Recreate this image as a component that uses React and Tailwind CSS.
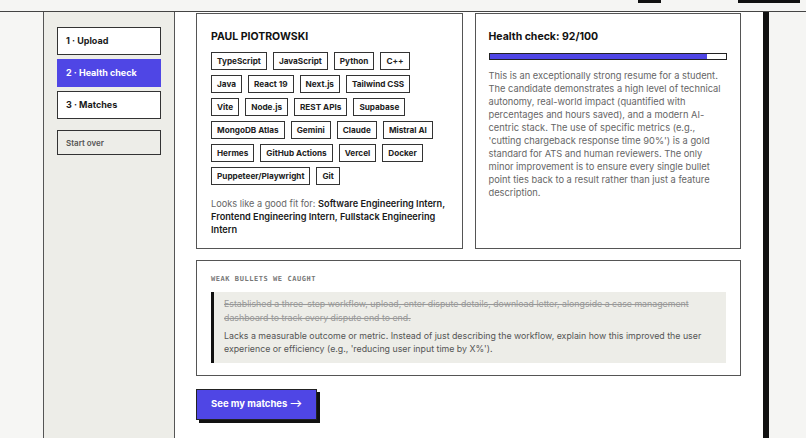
import React from 'react';

const skills = [
  'TypeScript', 'JavaScript', 'Python', 'C++',
  'Java', 'React 19', 'Next.js', 'Tailwind CSS',
  'Vite', 'Node.js', 'REST APIs', 'Supabase',
  'MongoDB Atlas', 'Gemini', 'Claude', 'Mistral AI',
  'Hermes', 'GitHub Actions', 'Vercel', 'Docker',
  'Puppeteer/Playwright', 'Git',
];

const steps = [
  { label: '1 · Upload', active: false },
  { label: '2 · Health check', active: true },
  { label: '3 · Matches', active: false },
];

function Sidebar() {
  return (
    <aside className="w-[132px] shrink-0 bg-[#edede8] border-x border-[#555] px-[13px] pt-[15px]">
      <div className="flex flex-col gap-[4px]">
        {steps.map((s) => (
          <div
            key={s.label}
            className={`h-[28px] flex items-center px-[8px] text-[9px] font-bold border-[1.5px] ${
              s.active
                ? 'bg-[#4f46e5] border-[#4f46e5] text-white'
                : 'bg-white border-[#333] text-[#1a1a1a]'
            }`}
          >
            {s.label}
          </div>
        ))}
      </div>
      <button className="mt-[11px] w-full h-[25px] flex items-center px-[8px] text-[8px] font-semibold text-[#555] border-[1.5px] border-[#333] bg-[#edede8]">
        Start over
      </button>
    </aside>
  );
}

function ProfileCard() {
  return (
    <div className="border-[1.5px] border-[#555] bg-white px-[14px] pt-[16px] pb-[12px]">
      <h2 className="text-[10.5px] font-bold text-[#111] leading-[14px]">PAUL PIOTROWSKI</h2>
      <div className="mt-[8px] pr-[9px] flex flex-wrap gap-x-[6px] gap-y-[5px]">
        {skills.map((s) => (
          <span
            key={s}
            className="h-[18px] flex items-center px-[5px] text-[8.2px] font-bold text-[#222] border-[1.5px] border-[#333]"
          >
            {s}
          </span>
        ))}
      </div>
      <p className="mt-[12px] text-[9.2px] leading-[13px] text-[#666]">
        Looks like a good fit for:{' '}
        <span className="font-semibold text-[#1a1a1a]">
          Software Engineering Intern, Frontend Engineering Intern, Fullstack Engineering Intern
        </span>
      </p>
    </div>
  );
}

function HealthCard() {
  const score = 92;
  return (
    <div className="border-[1.5px] border-[#555] bg-white px-[13px] pt-[16px] pb-[12px]">
      <h2 className="text-[10.5px] font-bold text-[#111] leading-[14px]">Health check: {score}/100</h2>
      <div className="mt-[9px] h-[7px] border border-[#222] bg-white">
        <div className="h-full bg-[#4f46e5]" style={{ width: `${score}%` }} />
      </div>
      <p className="mt-[9px] text-[9.3px] leading-[13px] text-[#666]">
        This is an exceptionally strong resume for a student. The candidate demonstrates a high level of
        technical autonomy, real-world impact (quantified with percentages and hours saved), and a modern
        AI-centric stack. The use of specific metrics (e.g., 'cutting chargeback response time 90%') is a
        gold standard for ATS and human reviewers. The only minor improvement is to ensure every single
        bullet point ties back to a result rather than just a feature description.
      </p>
    </div>
  );
}

function WeakBullets() {
  return (
    <div className="border-[1.5px] border-[#555] bg-white px-[14px] pt-[13px] pb-[12px]">
      <div className="text-[7px] font-bold tracking-[0.08em] text-[#777] font-['DejaVu_Sans_Mono',monospace]">
        WEAK BULLETS WE CAUGHT
      </div>
      <div className="mt-[7px] bg-[#edede8] border-l-[3px] border-[#111] pl-[10px] pr-[10px] pt-[5px] pb-[8px]">
        <p className="text-[8.8px] leading-[14px] text-[#999] line-through">
          Established a three-step workflow, upload, enter dispute details, download letter, alongside a case
          management dashboard to track every dispute end to end.
        </p>
        <p className="mt-[4px] text-[8.8px] leading-[13px] text-[#555]">
          Lacks a measurable outcome or metric. Instead of just describing the workflow, explain how this
          improved the user experience or efficiency (e.g., 'reducing user input time by X%').
        </p>
      </div>
    </div>
  );
}

export default function App() {
  return (
    <div className="w-[806px] h-[438px] overflow-hidden bg-[#f5f5f3] flex flex-col font-['Inter',sans-serif]">
      <header className="h-[12px] shrink-0 border-b border-[#444] bg-[#f5f5f3] flex items-start justify-end pr-[6px] relative z-10">
        <div className="mr-[77px] w-[23px] h-[3px] bg-[#111]" />
        <div className="w-[62px] h-[3px] bg-[#111]" />
      </header>
      <div className="flex flex-1 min-h-0">
        <div className="w-[43px] shrink-0 bg-[#f6f6f4]" />
        <Sidebar />
        <main className="w-[588px] shrink-0 bg-white pl-[21px] pr-[22px] pt-[1px]">
          <div className="grid grid-cols-2 gap-[12px] h-[235px]">
            <ProfileCard />
            <HealthCard />
          </div>
          <div className="mt-[12px]">
            <WeakBullets />
          </div>
          <button className="mt-[13px] h-[31px] px-[14px] bg-[#4f46e5] border-[1.5px] border-[#222] text-white text-[9.5px] font-bold shadow-[3px_3px_0_#111]">
            See my matches ⟶
          </button>
        </main>
        <div className="w-[6px] shrink-0 bg-[#111]" />
        <div className="flex-1 bg-[#f5f5f3]" />
      </div>
    </div>
  );
}
